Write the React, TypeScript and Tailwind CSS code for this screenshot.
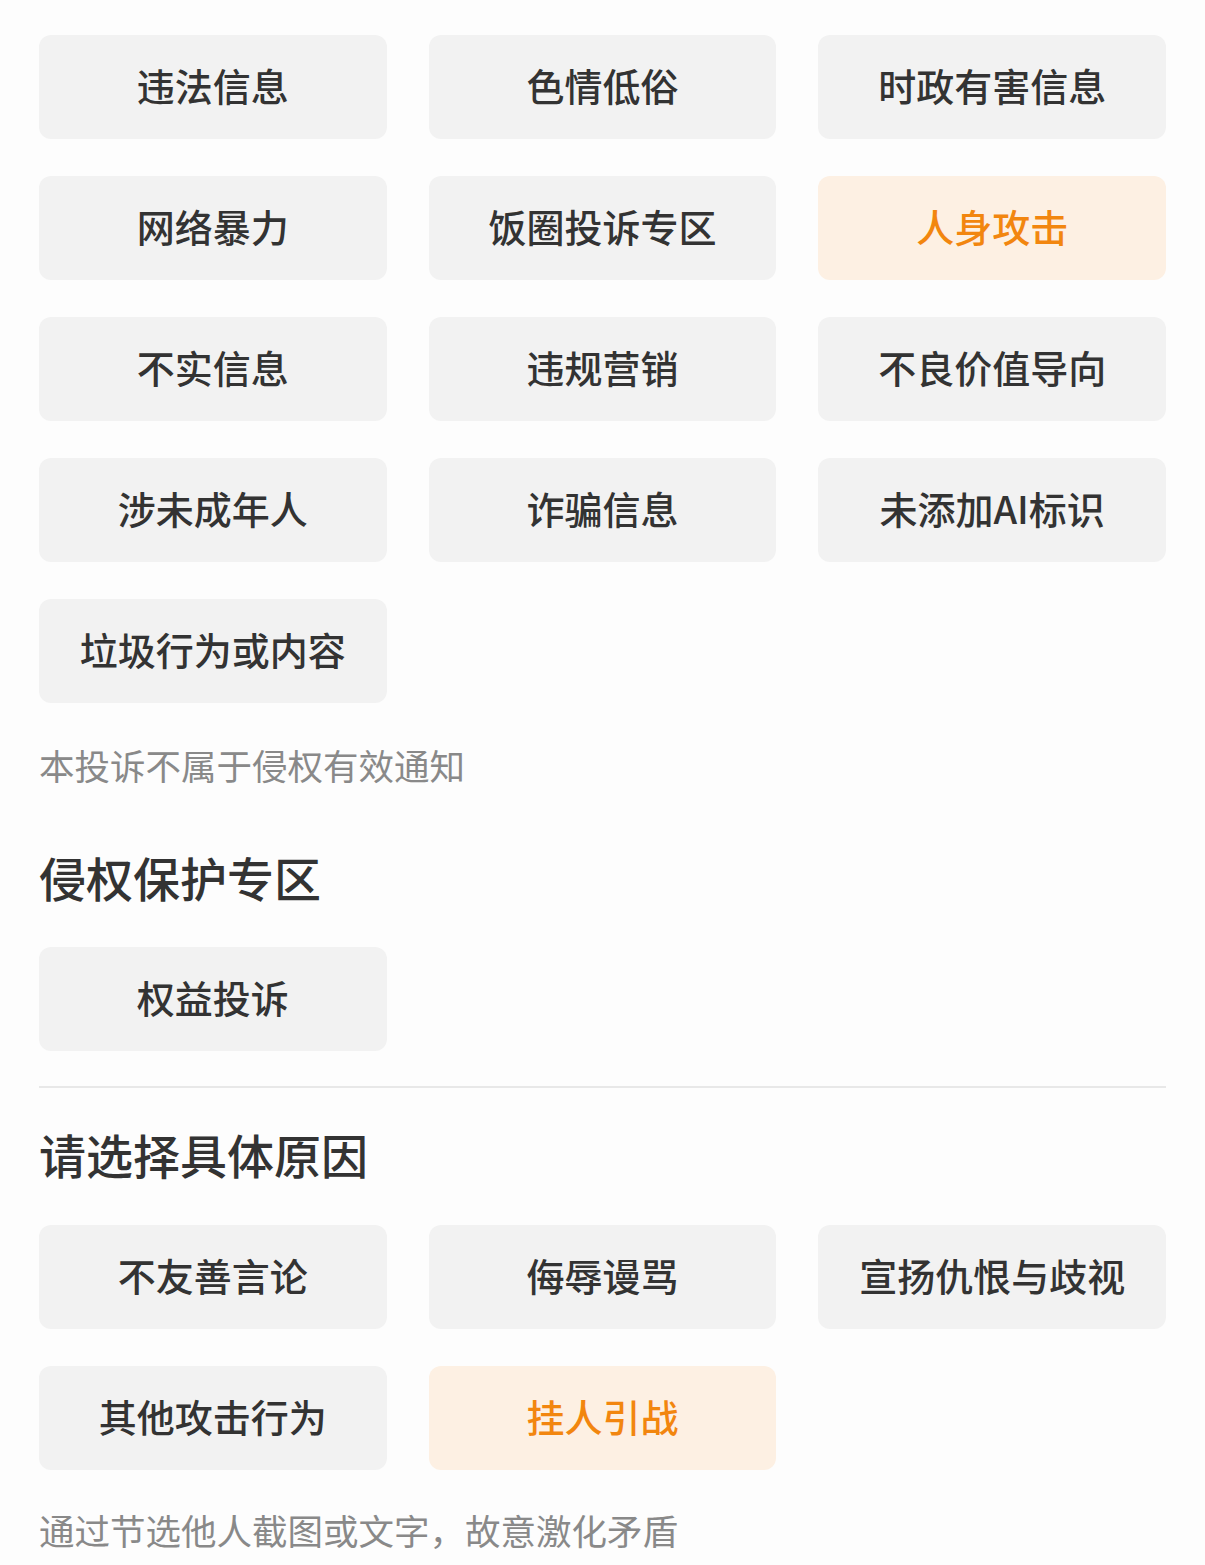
const general = [
  "违法信息",
  "色情低俗",
  "时政有害信息",
  "网络暴力",
  "饭圈投诉专区",
  "人身攻击",
  "不实信息",
  "违规营销",
  "不良价值导向",
  "涉未成年人",
  "诈骗信息",
  "未添加AI标识",
  "垃圾行为或内容",
];

const reasons = ["不友善言论", "侮辱谩骂", "宣扬仇恨与歧视", "其他攻击行为", "挂人引战"];

function Chip({ label, active }: { label: string; active?: boolean }) {
  return (
    <div
      className={
        active
          ? "h-[104px] pb-[6px] rounded-[12px] bg-[#fdf0e3] flex items-center justify-center text-[38px] font-medium text-[#f2860f]"
          : "h-[104px] pb-[6px] rounded-[12px] bg-[#f2f2f2] flex items-center justify-center text-[38px] font-medium text-[#333333]"
      }
    >
      {label}
    </div>
  );
}

export default function App() {
  return (
    <div
      className="min-h-[1565px] bg-[#fdfdfd] px-[39px] pt-[35px] pb-[20px]"
      style={{ fontFamily: '"Noto Sans CJK SC", "Noto Sans", sans-serif' }}
    >
      {/* Reason grid */}
      <div className="grid grid-cols-3 gap-x-[42px] gap-y-[37px]">
        {general.map((g) => (
          <Chip key={g} label={g} active={g === "人身攻击"} />
        ))}
      </div>

      <p className="mt-[38px] pb-[2px] text-[35.5px] leading-[48px] text-[#898989]">本投诉不属于侵权有效通知</p>

      {/* Rights section */}
      <h2 className="mt-[56px] pb-[3px] text-[47px] leading-[60px] font-medium text-[#333333]">侵权保护专区</h2>
      <div className="mt-[37px] grid grid-cols-3 gap-x-[42px]">
        <Chip label="权益投诉" />
      </div>

      <div className="mt-[35px] h-[2px] bg-[#e8e8e8]" />

      {/* Specific reasons */}
      <h2 className="mt-[36px] pb-[3px] text-[47px] leading-[60px] font-medium text-[#333333]">请选择具体原因</h2>
      <div className="mt-[38px] grid grid-cols-3 gap-x-[42px] gap-y-[37px]">
        {reasons.map((r) => (
          <Chip key={r} label={r} active={r === "挂人引战"} />
        ))}
      </div>

      <p className="mt-[36px] text-[35.5px] leading-[48px] text-[#898989]">通过节选他人截图或文字，故意激化矛盾</p>
    </div>
  );
}
